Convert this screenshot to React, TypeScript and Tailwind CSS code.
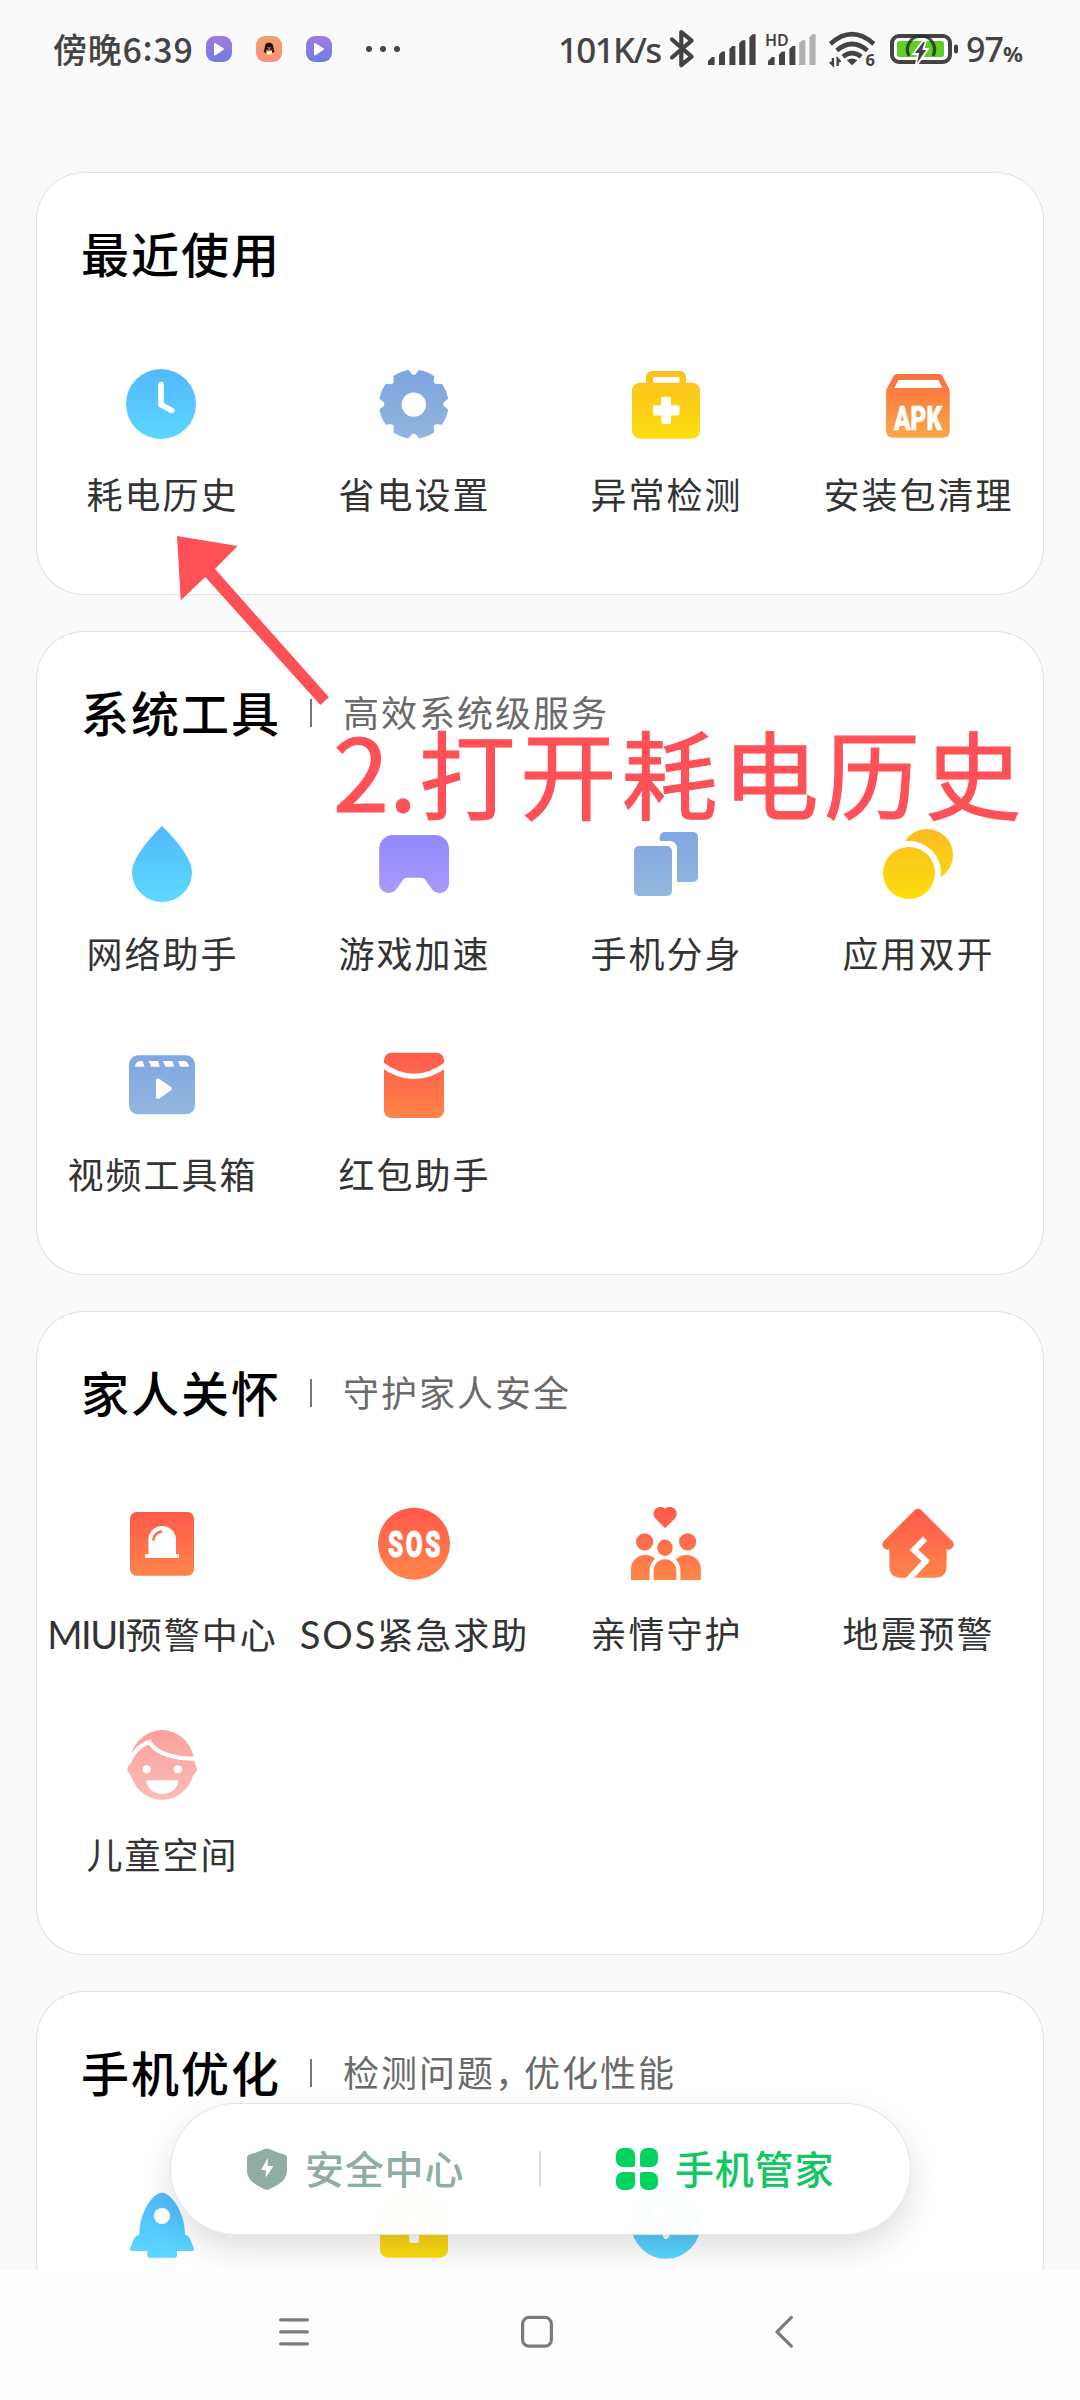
import { useId } from 'react'
import clsx from 'clsx'

type GlyphProps = {
  from: string
  to: string
  children: (fill: string) => React.ReactNode
}

const Glyph = ({ from, to, children }: GlyphProps) => {
  const id = useId()
  return (
    <svg viewBox="0 0 108 108" className="size-[108px]">
      <defs>
        <linearGradient
          id={id}
          gradientUnits="userSpaceOnUse"
          x1="54"
          y1="20"
          x2="54"
          y2="90"
        >
          <stop offset="0" stopColor={from} />
          <stop offset="1" stopColor={to} />
        </linearGradient>
      </defs>
      {children(`url(#${id})`)}
    </svg>
  )
}

const ClockIcon = () => (
  <Glyph from="#54b8fc" to="#5bd8ff">
    {(fill) => (
      <>
        <circle cx="53" cy="54" r="35" fill={fill} />
        <path
          d="M53 34.5V54.8L63.8 60.4"
          fill="none"
          stroke="#fff"
          strokeWidth="5.6"
          strokeLinecap="round"
          strokeLinejoin="round"
        />
      </>
    )}
  </Glyph>
)

const gearPath = () => {
  const at = (r: number, deg: number) => {
    const a = (deg * Math.PI) / 180
    return `${(53.8 + r * Math.cos(a)).toFixed(2)} ${(54.2 + r * Math.sin(a)).toFixed(2)}`
  }
  let d = ''
  for (let i = 0; i < 8; i++) {
    const deg = i * 45
    d += `${i ? 'L' : 'M'}${at(33.6, deg - 10)}L${at(29, deg - 5)}`
    d += `Q${at(27.6, deg)} ${at(29, deg + 5)}L${at(33.6, deg + 10)}`
    d += `A33.6 33.6 0 0 1 ${at(33.6, deg + 35)}`
  }
  return d + 'Z'
}

const GearIcon = () => (
  <Glyph from="#7ca4e0" to="#92b6de">
    {(fill) => (
      <>
        <path
          d={gearPath()}
          fill={fill}
          stroke={fill}
          strokeWidth="2.4"
          strokeLinejoin="round"
        />
        <circle cx="53.8" cy="54.6" r="12.2" fill="#fff" />
      </>
    )}
  </Glyph>
)

const KitIcon = () => (
  <Glyph from="#fcbf1e" to="#fddf10">
    {(fill) => (
      <>
        <rect x="34" y="21" width="40" height="24" rx="6" fill={fill} />
        <rect x="20" y="32.7" width="68" height="56" rx="8" fill={fill} />
        <rect x="41" y="27" width="26.5" height="5.8" rx="1" fill="#fff" />
        <rect x="49.2" y="46.7" width="9.7" height="27.3" rx="2" fill="#fff" />
        <rect x="41" y="55.3" width="26.5" height="10.2" rx="2" fill="#fff" />
      </>
    )}
  </Glyph>
)

const ApkIcon = () => (
  <Glyph from="#f86c3e" to="#ffa846">
    {(fill) => (
      <>
        <path
          d="M33.5 24H75Q77.5 24 78.6 26.2L85 38.5Q85.8 40 85.8 42V80.5Q85.8 87.7 78.5 87.7H29.3Q22.1 87.7 22.1 80.5V42Q22.1 40 22.9 38.5L29.4 26.2Q30.6 24 33.5 24Z"
          fill={fill}
        />
        <path d="M34.5 30H74.4L78.3 38H30.3Z" fill="#fff" />
        <text
          x="30"
          y="79.6"
          fill="#fff"
          stroke="#fff"
          strokeWidth="0.6"
          fontFamily="Roboto, sans-serif"
          fontWeight="900"
          fontSize="33"
          textLength="48"
          lengthAdjust="spacingAndGlyphs"
        >
          APK
        </text>
      </>
    )}
  </Glyph>
)

const DropIcon = () => (
  <Glyph from="#52bafc" to="#5bd8ff">
    {(fill) => (
      <path
        d="M54 17C46 25 38 33.5 31.5 43.5Q24 55 24 63.4A30 29.6 0 0 0 84 63.4Q84 55 76.5 43.5C70 33.5 62 25 54 17Z"
        fill={fill}
      />
    )}
  </Glyph>
)

const GameIcon = () => (
  <Glyph from="#8f86fd" to="#ab9cfb">
    {(fill) => (
      <path
        d="M33.2 26H75A14 14 0 0 1 89 40V75A9 9 0 0 1 80 84Q74 84 71 79L65.5 71Q64 68.7 61.5 68.7H46.8Q44.3 68.7 42.8 71L37.3 79Q34 84 28.2 84A9 9 0 0 1 19.2 75V40A14 14 0 0 1 33.2 26Z"
        fill={fill}
      />
    )}
  </Glyph>
)

const CloneIcon = () => (
  <Glyph from="#7fa6e1" to="#95b8de">
    {(fill) => (
      <>
        <rect x="47.8" y="23" width="38.2" height="50" rx="5" fill={fill} />
        <rect x="16" y="32" width="49" height="60" rx="7" fill="#fff" />
        <rect x="22" y="37" width="38" height="50" rx="5" fill={fill} />
      </>
    )}
  </Glyph>
)

const DualIcon = () => (
  <Glyph from="#fbbb20" to="#fbdf0e">
    {(fill) => (
      <>
        <circle cx="63" cy="46" r="26" fill={fill} />
        <circle cx="45" cy="64" r="32" fill="#fff" />
        <circle cx="45" cy="64" r="26" fill={fill} />
      </>
    )}
  </Glyph>
)

const VideoIcon = () => (
  <Glyph from="#7fa5e1" to="#95b8de">
    {(fill) => (
      <>
        <rect x="21" y="25.3" width="66" height="59" rx="9" fill={fill} />
        <path
          d="M27 36.7Q27.5 31 33 31H34.5L36.6 36.7ZM40.8 31H50L51.8 36.7H43ZM55 31H64.4L66.3 36.7H57.4ZM70 31H75Q80.5 31 81 36.7H72.2Z"
          fill="#fff"
        />
        <path
          d="M50 50.5L61.8 58.7L50 67Z"
          fill="#fff"
          stroke="#fff"
          strokeWidth="4"
          strokeLinejoin="round"
        />
      </>
    )}
  </Glyph>
)

const EnvelopeIcon = () => (
  <Glyph from="#ff594c" to="#ff8548">
    {(fill) => (
      <>
        <rect x="24" y="22.7" width="60" height="65.3" rx="7.5" fill={fill} />
        <path
          d="M22 34.6Q37 46.3 54 46.3T86 34.6"
          fill="none"
          stroke="#fff"
          strokeWidth="5.2"
        />
      </>
    )}
  </Glyph>
)

const AlarmIcon = () => (
  <Glyph from="#ff594c" to="#ff8548">
    {(fill) => (
      <>
        <rect x="22" y="23" width="64" height="63.7" rx="6.5" fill={fill} />
        <path
          d="M40.4 65.3V50.8A13.8 13.8 0 0 1 68 50.8V65.3H71V69H37V65.3Z"
          fill="#fff"
        />
        <path
          d="M45.2 51.5Q46 43.5 54 42.2"
          fill="none"
          stroke={fill}
          strokeWidth="2.6"
        />
      </>
    )}
  </Glyph>
)

const SosIcon = () => (
  <Glyph from="#ff594c" to="#ff8548">
    {(fill) => (
      <>
        <circle cx="54" cy="54.8" r="36" fill={fill} />
        <text
          x="28"
          y="68.2"
          fill="#fff"
          stroke="#fff"
          strokeWidth="0.9"
          fontFamily="Roboto, sans-serif"
          fontWeight="900"
          fontSize="37"
          letterSpacing="4"
          textLength="55"
          lengthAdjust="spacingAndGlyphs"
        >
          SOS
        </text>
      </>
    )}
  </Glyph>
)

const FamilyIcon = () => (
  <Glyph from="#ff594c" to="#ff8548">
    {(fill) => (
      <g fill={fill}>
        <path d="M53.1 39.2L43.4 29.6Q41.6 27.6 41.6 24.8C41.6 18.6 49.5 16 53.1 20C56.8 16 64.7 18.6 64.7 24.8Q64.7 27.6 62.9 29.6Z" />
        <circle cx="32.6" cy="52.8" r="8.6" />
        <circle cx="75.6" cy="52.8" r="8.6" />
        <path d="M19 91V80A14.4 14 0 0 1 47.8 80V91ZM60 91V80A14.4 14 0 0 1 88.8 80V91Z" />
        <path
          d="M41.6 93V81.7A11.4 11.4 0 0 1 64.4 81.7V93Z"
          stroke="#fff"
          strokeWidth="8"
        />
        <path d="M41.6 91V81.7A11.4 11.4 0 0 1 64.4 81.7V91Z" />
        <ellipse cx="53" cy="58.8" rx="7.7" ry="8.2" />
      </g>
    )}
  </Glyph>
)

const QuakeIcon = () => (
  <Glyph from="#ff594c" to="#ff8548">
    {(fill) => (
      <>
        <path
          d="M50.8 21Q54 18.4 57.2 21L88.4 52.2C92 56 88 61.6 82.6 60.6V77Q82.6 88.7 71 88.7H37Q25.4 88.7 25.4 77V60.6C20 61.6 16 56 19.6 52.2Z"
          fill={fill}
        />
        <path
          d="M61 49.7L50 60.8L61.8 71.8L44 91"
          fill="none"
          stroke="#fff"
          strokeWidth="6"
        />
      </>
    )}
  </Glyph>
)

const ChildIcon = () => (
  <Glyph from="#fc9f9d" to="#f9beb7">
    {(fill) => (
      <>
        <ellipse cx="54" cy="55" rx="32.6" ry="35" fill={fill} />
        <path
          d="M23 50L20 57Q18.6 59.5 20 62L25 68H83L88 62Q89.8 59.5 88.4 57L85.6 50Z"
          fill={fill}
        />
        <path
          d="M20 54Q27 37 41.2 32Q51 48.5 89 48.8"
          fill="none"
          stroke="#fff"
          strokeWidth="4.4"
        />
        <circle cx="38.7" cy="59.3" r="4" fill="#fff" />
        <circle cx="69.7" cy="59.3" r="4" fill="#fff" />
        <path d="M38.4 70.3H70.2C69.5 88.5 39 88.5 38.4 70.3Z" fill="#fff" />
      </>
    )}
  </Glyph>
)

const RocketIcon = () => (
  <Glyph from="#50b8fc" to="#5bd8ff">
    {(fill) => (
      <>
        <path
          d="M54 23.7C63 23.7 77 43 77 65.5Q81.5 67 83 72L86 79.5Q86.2 82 83.5 82H69V86Q69 88.7 66.3 88.7H42Q39.4 88.7 39.4 86V82H24.5Q21.8 82 22 79.5L25 72Q26.5 67 31.4 65.5C31.4 43 45 23.7 54 23.7Z"
          fill={fill}
        />
        <circle cx="54" cy="47" r="8.1" fill="#fff" />
      </>
    )}
  </Glyph>
)

const PulseIcon = () => (
  <Glyph from="#50b8fc" to="#5bd8ff">
    {(fill) => (
      <>
        <circle cx="54" cy="55" r="34.8" fill={fill} />
        <path
          d="M18 57H36L46 38L54 67L61 50L66 57H90"
          fill="none"
          stroke="#fff"
          strokeWidth="6"
          strokeLinejoin="round"
        />
      </>
    )}
  </Glyph>
)

type Tool = { label: React.ReactNode; icon: React.ComponentType }

const recent: Tool[] = [
  { label: '耗电历史', icon: ClockIcon },
  { label: '省电设置', icon: GearIcon },
  { label: '异常检测', icon: KitIcon },
  { label: '安装包清理', icon: ApkIcon },
]

const system: Tool[] = [
  { label: '网络助手', icon: DropIcon },
  { label: '游戏加速', icon: GameIcon },
  { label: '手机分身', icon: CloneIcon },
  { label: '应用双开', icon: DualIcon },
  { label: '视频工具箱', icon: VideoIcon },
  { label: '红包助手', icon: EnvelopeIcon },
]

const family: Tool[] = [
  {
    label: (
      <>
        <span className="text-[38px] tracking-[-1.5px]">MIUI</span>预警中心
      </>
    ),
    icon: AlarmIcon,
  },
  {
    label: (
      <>
        <span className="text-[38px] tracking-[2px]">SOS</span>紧急求助
      </>
    ),
    icon: SosIcon,
  },
  { label: '亲情守护', icon: FamilyIcon },
  { label: '地震预警', icon: QuakeIcon },
  { label: '儿童空间', icon: ChildIcon },
]

const optimize: Tool[] = [
  { label: '', icon: RocketIcon },
  { label: '', icon: KitIcon },
  { label: '', icon: PulseIcon },
]

type SectionProps = {
  title: string
  subtitle?: React.ReactNode
  tools: Tool[]
}

const Section = ({ title, subtitle, tools }: SectionProps) => (
  <section className="rounded-[48px] bg-white pb-[37px] inset-ring inset-ring-[#e1e1e1]">
    <header className="flex h-[165px] items-center pl-[45px]">
      <h2 className="text-[48px] leading-none font-medium tracking-[2px] text-black">
        {title}
      </h2>
      {subtitle && (
        <>
          <span className="mb-0.5 ml-[29px] h-7 w-0.5 bg-[#777]" />
          <span className="mb-0.5 ml-[31px] text-[36px] leading-none tracking-[2px] text-[#6a6a6a]">
            {subtitle}
          </span>
        </>
      )}
    </header>
    <div className="grid grid-cols-4">
      {tools.map(({ label, icon: Icon }, i) => (
        <div key={i} className="flex h-[221px] flex-col items-center pt-[13px]">
          <Icon />
          <span className="mt-3 pl-px text-[36px] leading-[50px] tracking-[2px] whitespace-nowrap text-[#333]">
            {label}
          </span>
        </div>
      ))}
    </div>
  </section>
)

const NoticeIcon = ({ penguin }: { penguin?: boolean }) => (
  <span
    className={clsx(
      'flex size-[26px] items-center justify-center rounded-[9px] bg-linear-to-b',
      penguin ? 'from-[#f0a068] to-[#fc8d84]' : 'from-[#a27adb] to-[#6b7de6]',
    )}
  >
    <svg viewBox="0 0 26 26" className="size-[26px]">
      {penguin ? (
        <>
          <ellipse cx="13" cy="18" rx="5" ry="2" fill="#f5a623" />
          <path d="M13 6.6Q17 6.8 17.4 11.5L18.6 16L16.8 16.4Q13 20 9.2 16.4L7.6 16L8.8 11.5Q9 6.8 13 6.6Z" fill="#1c1410" />
          <path d="M10.5 11.4H15.6L13 12.8Z" fill="#f7b52c" />
          <ellipse cx="13.2" cy="16" rx="2.9" ry="2.6" fill="#fff" />
          <path d="M9.4 13.4Q13 15 16.8 13.2L16.5 14.6Q13 16 9.8 14.8Z" fill="#e5402c" />
        </>
      ) : (
        <path
          d="M9 8L17 13L9 18.5Z"
          fill="#fff"
          stroke="#fff"
          strokeWidth="2"
          strokeLinejoin="round"
        />
      )}
    </svg>
  </span>
)

const bars = [
  'M0 31V27L4 23H6.6V31Z',
  'M11 31V20.5L14 17.6H17V31Z',
  'M21.4 31V15L24.4 12H27.4V31Z',
  'M31.2 31V9L34.2 6.2H37.4V31Z',
  'M41.4 31V3.4L44.4 0.2H47.6V31Z',
]

const Signal = ({ level }: { level: number }) => (
  <svg viewBox="0 0 48 31" className="h-[31px] w-12">
    {bars.map((d, i) => (
      <path key={d} d={d} fill={i < level ? '#434343' : '#b2b2b2'} />
    ))}
  </svg>
)

const StatusBar = () => (
  <div className="flex h-[98px] shrink-0 items-center pl-[53px] text-[#444]">
    <span className="w-[153px] font-['Noto_Sans_CJK_SC',sans-serif] text-[34px] leading-none font-medium tracking-[0.7px] whitespace-nowrap">
      傍晚6<span className="relative -top-0.5">:</span>39
    </span>
    <div className="flex gap-6">
      <NoticeIcon />
      <NoticeIcon penguin />
      <NoticeIcon />
    </div>
    <div className="ml-[34px] flex gap-2">
      <i className="size-1.5 rounded-full bg-[#444]" />
      <i className="size-1.5 rounded-full bg-[#444]" />
      <i className="size-1.5 rounded-full bg-[#444]" />
    </div>
    <span className="ml-[158px] w-[111px] font-['Noto_Sans',sans-serif] text-[35px] leading-none font-medium tracking-[-1.7px] whitespace-nowrap">
      101K/s
    </span>
    <svg viewBox="0 0 26 40" className="h-10 w-[26px]" fill="none" stroke="#434343" strokeWidth="4.2" strokeLinejoin="round" strokeLinecap="round">
      <path d="M3 10.5L22.6 27.6L12.3 36.2V3L22.6 11.6L3 28.5" />
    </svg>
    <div className="ml-[13px]">
      <Signal level={5} />
    </div>
    <div className="relative ml-3">
      <Signal level={3} />
      <span className="absolute -top-[3px] -left-[3px] font-['Noto_Sans',sans-serif] text-[16px] leading-[18px] font-semibold">
        HD
      </span>
    </div>
    <svg viewBox="0 0 48 38" className="ml-3 h-[38px] w-12" fill="none" stroke="#434343" strokeWidth="4.6">
      <path d="M2.4 14Q24 -5.6 45.8 14" />
      <path d="M8.8 20.6Q24 7.4 39.4 20.6" />
      <path d="M15 26.8Q24 19.6 33.2 26.8" />
      <path d="M18.8 30.2Q24 26.6 29.4 30.2L24 35.2Z" fill="#434343" stroke="none" />
      <path d="M4.9 28V35L2 32M9.7 36V29L12.6 32" strokeWidth="2.4" />
      <text x="37.4" y="36" fill="#434343" stroke="none" fontFamily="Noto Sans, sans-serif" fontWeight="700" fontSize="16.5">
        6
      </text>
    </svg>
    <svg viewBox="0 0 68 36" className="ml-[14px] h-9 w-[68px]">
      <rect x="2" y="5" width="58" height="26" rx="7" fill="#fff" stroke="#434343" strokeWidth="4" />
      <rect x="7" y="10" width="47" height="16" rx="2.5" fill="#62cc2b" />
      <path d="M19 25A13.6 13.6 0 1 1 43 25" fill="none" stroke="#1c2d17" strokeOpacity="0.8" strokeWidth="3.2" />
      <path d="M33 10L23 23H28L25.5 36L38 18H33.4L36 10Z" fill="#434343" stroke="#fff" strokeWidth="1.8" />
      <rect x="64" y="13.4" width="4" height="9" rx="2" fill="#434343" />
    </svg>
    <span className="ml-[8px] font-['Noto_Sans',sans-serif] text-[34px] leading-none font-medium tracking-[-1px]">
      97<span className="text-[22px] font-bold">%</span>
    </span>
  </div>
)

const TabBar = () => (
  <nav className="absolute top-[2103px] left-[170px] flex h-[132px] w-[741px] items-center rounded-full border border-black/10 bg-white/98 text-[39px] font-medium tracking-[0.8px] shadow-[0_14px_32px_rgba(0,0,0,0.13)]">
    <div className="flex w-[368px] items-center pl-[76px] text-[#8fada5]">
      <svg viewBox="0 0 40 42" className="h-[42px] w-10">
        <path
          d="M18 .8Q20 0 22 .8Q29 4.4 36.5 6.2Q40 7 40 10V22C40 32 33 36 22.4 41.2Q20 42.4 17.6 41.2C7 36 0 32 0 22V10Q0 7 3.5 6.2Q11 4.4 18 .8Z"
          fill="currentColor"
        />
        <path d="M20.8 10L14 22H18.8V29.6L26.4 18H20.8Z" fill="#fff" />
      </svg>
      <span className="ml-[18px] leading-none">安全中心</span>
    </div>
    <span className="h-9 w-0.5 bg-[#dedede]" />
    <div className="flex flex-1 items-center pl-[75px] text-[#10c763]">
      <div className="grid grid-cols-2 gap-[5px]">
        <i className="size-[18.5px] rounded-[7px] rounded-br-xs bg-[#00d35e]" />
        <i className="size-[18.5px] rounded-[7px] rounded-bl-xs bg-[#00d35e]" />
        <i className="size-[18.5px] rounded-[7px] rounded-tr-xs bg-[#00d35e]" />
        <i className="size-[18.5px] rounded-[7px] rounded-tl-xs bg-[#00d35e]" />
      </div>
      <span className="ml-[17px] leading-none">手机管家</span>
    </div>
  </nav>
)

const NavBar = () => (
  <div className="relative flex h-[130px] shrink-0 items-start bg-[#fefefe] pt-[45px] pl-[278px]">
    <svg
      viewBox="0 0 520 34"
      className="h-[34px] w-[520px]"
      fill="none"
      stroke="#7b7b7b"
      strokeWidth="3.2"
      strokeLinecap="round"
      strokeLinejoin="round"
    >
      <path d="M2.6 4.8H29.4M2.6 16.8H29.4M2.6 28.8H29.4" />
      <rect x="244.6" y="2.4" width="28.8" height="28.8" rx="6.5" />
      <path d="M513.4 2.4L499 16.8L513.4 31.2" />
    </svg>
  </div>
)

export default function App() {
  return (
    <div className="relative flex h-[2400px] w-[1080px] flex-col overflow-hidden bg-[#fafafa] font-[Lato,'Noto_Sans_CJK_SC',sans-serif]">
      <div className="flex h-[2270px] shrink-0 flex-col overflow-hidden">
        <StatusBar />
        <main className="mt-[74px] flex shrink-0 flex-col gap-9 px-9">
          <Section title="最近使用" tools={recent} />
          <Section title="系统工具" subtitle="高效系统级服务" tools={system} />
          <Section title="家人关怀" subtitle="守护家人安全" tools={family} />
          <Section
            title="手机优化"
            subtitle={
              <>
                检测问题<span className="tracking-[-7px]">，</span>优化性能
              </>
            }
            tools={optimize}
          />
        </main>
      </div>
      <TabBar />
      <NavBar />
      <svg
        viewBox="0 0 160 175"
        className="absolute top-[534px] left-[173px] h-[175px] w-[160px]"
      >
        <path
          d="M4 2L64.6 12L42 35L156 163.3L147.3 171L32.3 43L7.8 66.3Z"
          fill="#fe5157"
        />
      </svg>
      <p className="absolute top-[718px] left-[333px] font-['Noto_Sans_CJK_SC',sans-serif] text-[101px] leading-[101px] whitespace-nowrap text-[#fe5157] [-webkit-text-stroke:1.2px_#fe5157]">
        2.
        <span className="ml-0.5 text-[96px] leading-none tracking-[5.2px]">
          打开耗电历史
        </span>
      </p>
    </div>
  )
}
